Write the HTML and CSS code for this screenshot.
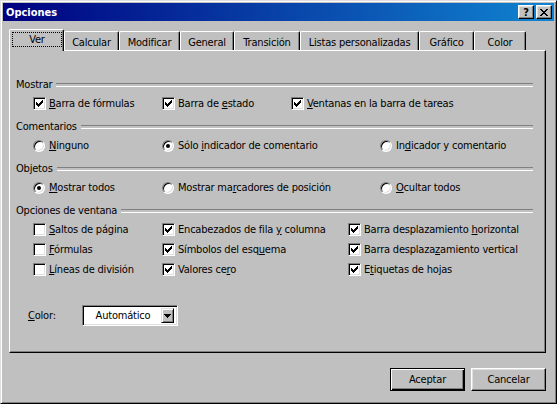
FILE: index.html
```html
<!DOCTYPE html>
<html lang="es">
<head>
<meta charset="utf-8">
<title>Opciones</title>
<link rel="stylesheet" href="styles.css">
</head>
<body>
<div class="window">
  <div class="titlebar">
    <span class="title">Opciones</span>
    <div class="caption-buttons">
      <span class="cap-btn help">?</span>
      <span class="cap-btn close">
        <svg width="8" height="7" viewBox="0 0 8 7" shape-rendering="crispEdges">
          <rect x="0" y="0" width="2" height="1"/><rect x="6" y="0" width="2" height="1"/>
          <rect x="1" y="1" width="2" height="1"/><rect x="5" y="1" width="2" height="1"/>
          <rect x="2" y="2" width="4" height="1"/>
          <rect x="3" y="3" width="2" height="1"/>
          <rect x="2" y="4" width="4" height="1"/>
          <rect x="1" y="5" width="2" height="1"/><rect x="5" y="5" width="2" height="1"/>
          <rect x="0" y="6" width="2" height="1"/><rect x="6" y="6" width="2" height="1"/>
        </svg>
      </span>
    </div>
  </div>

  <div class="content">
    <div class="tabs">
      <div class="tab active"><span class="focus">Ver</span></div>
      <div class="tab">Calcular</div>
      <div class="tab">Modificar</div>
      <div class="tab">General</div>
      <div class="tab">Transición</div>
      <div class="tab">Listas personalizadas</div>
      <div class="tab">Gráfico</div>
      <div class="tab">Color</div>
    </div>

    <div class="panel">
      <section class="group">
        <div class="group-title">Mostrar</div>
        <div class="rows cols-mostrar">
          <div class="opt"><span class="check on"></span><span><u>B</u>arra de fórmulas</span></div>
          <div class="opt"><span class="check on"></span><span>Barra de <u>e</u>stado</span></div>
          <div class="opt"><span class="check on"></span><span><u>V</u>entanas en la barra de tareas</span></div>
        </div>
      </section>

      <section class="group">
        <div class="group-title">Comentarios</div>
        <div class="rows cols-radio">
          <div class="opt"><span class="radio"></span><span><u>N</u>inguno</span></div>
          <div class="opt"><span class="radio on"></span><span>Sólo <u>i</u>ndicador de comentario</span></div>
          <div class="opt"><span class="radio"></span><span>In<u>d</u>icador y comentario</span></div>
        </div>
      </section>

      <section class="group">
        <div class="group-title">Objetos</div>
        <div class="rows cols-radio">
          <div class="opt"><span class="radio on"></span><span><u>M</u>ostrar todos</span></div>
          <div class="opt"><span class="radio"></span><span>Mostrar ma<u>r</u>cadores de posición</span></div>
          <div class="opt"><span class="radio"></span><span><u>O</u>cultar todos</span></div>
        </div>
      </section>

      <section class="group">
        <div class="group-title">Opciones de ventana</div>
        <div class="rows cols-ventana">
          <div class="opt"><span class="check"></span><span><u>S</u>altos de página</span></div>
          <div class="opt"><span class="check on"></span><span>Encabezados de fila <u>y</u> columna</span></div>
          <div class="opt"><span class="check on"></span><span>Barra desplazamiento <u>h</u>orizontal</span></div>
          <div class="opt"><span class="check"></span><span><u>F</u>órmulas</span></div>
          <div class="opt"><span class="check on"></span><span>Símbolos del esq<u>u</u>ema</span></div>
          <div class="opt"><span class="check on"></span><span>Barra desplaza<u>z</u>amiento vertical</span></div>
          <div class="opt"><span class="check"></span><span><u>L</u>íneas de división</span></div>
          <div class="opt"><span class="check on"></span><span>Valores ce<u>r</u>o</span></div>
          <div class="opt"><span class="check on"></span><span>E<u>t</u>iquetas de hojas</span></div>
        </div>
      </section>

      <div class="color-row">
        <span class="color-label"><u>C</u>olor:</span>
        <div class="combo">
          <span class="combo-text">Automático</span>
          <span class="combo-btn">
            <svg width="7" height="4" viewBox="0 0 7 4" shape-rendering="crispEdges">
              <rect x="0" y="0" width="7" height="1"/>
              <rect x="1" y="1" width="5" height="1"/>
              <rect x="2" y="2" width="3" height="1"/>
              <rect x="3" y="3" width="1" height="1"/>
            </svg>
          </span>
        </div>
      </div>
    </div>

    <div class="footer">
      <span class="button default">Aceptar</span>
      <span class="button">Cancelar</span>
    </div>
  </div>
</div>
</body>
</html>
```

FILE: styles.css
```css
* { box-sizing: border-box; }

html, body {
  margin: 0;
  padding: 0;
}

body {
  width: 557px;
  height: 404px;
  overflow: hidden;
  background: #c0c0c0;
  font-family: "DejaVu Sans Condensed", "DejaVu Sans", sans-serif;
  font-stretch: condensed;
  font-size: 11px;
  line-height: 13px;
  letter-spacing: -0.2px;
  color: #000;
}

u { text-decoration: underline; text-underline-offset: 1px; }

.window {
  width: 557px;
  height: 404px;
  background: #c0c0c0;
  border: 1px solid;
  border-color: #dfdfdf #000 #000 #dfdfdf;
  box-shadow: inset 1px 1px #fff, inset -1px -1px #808080;
  padding: 2px;
  display: flex;
  flex-direction: column;
}

/* ---------- title bar ---------- */
.titlebar {
  height: 18px;
  flex: none;
  background: linear-gradient(to right, #000080, #1084d0);
  display: flex;
  align-items: center;
  justify-content: space-between;
  padding: 0 2px 0 3px;
}

.title {
  color: #fff;
  font-weight: bold;
  font-size: 11px;
  letter-spacing: 0;
}

.caption-buttons {
  display: flex;
  gap: 2px;
}

.cap-btn {
  width: 16px;
  height: 14px;
  background: #c0c0c0;
  border: 1px solid;
  border-color: #fff #000 #000 #fff;
  box-shadow: inset -1px -1px #808080, inset 1px 1px #dfdfdf;
  display: flex;
  align-items: center;
  justify-content: center;
}

.cap-btn.help {
  font-weight: bold;
  font-size: 11px;
  line-height: 12px;
  padding-top: 1px;
}

.cap-btn svg { display: block; fill: #000; }

/* ---------- content ---------- */
.content {
  flex: 1;
  display: flex;
  flex-direction: column;
  padding: 8px 8px 0 6px;
}

.tabs {
  display: flex;
  align-items: flex-end;
  height: 21px;
  flex: none;
  position: relative;
  z-index: 1;
}

.tab {
  height: 19px;
  border-left: 1px solid #fff;
  border-top: 1px solid #fff;
  border-right: 1px solid #000;
  border-radius: 2px 2px 0 0;
  box-shadow: inset -1px 0 #808080;
  text-align: center;
  padding-top: 4px;
  white-space: nowrap;
  background: #c0c0c0;
}

.tab:nth-child(1) { width: 55px; }
.tab:nth-child(2) { width: 55px; }
.tab:nth-child(3) { width: 61px; }
.tab:nth-child(4) { width: 54px; }
.tab:nth-child(5) { width: 66px; }
.tab:nth-child(6) { width: 119px; }
.tab:nth-child(7) { width: 55px; }
.tab:nth-child(8) { width: 52px; }

.tab.active {
  height: 22px;
  margin-bottom: -1px;
  padding: 2px 1px 0 2px;
}

.focus {
  display: block;
  height: 15px;
  border: 1px dotted #000;
  line-height: 14px;
}

.panel {
  height: 303px;
  flex: none;
  border: 1px solid;
  border-color: #fff #000 #000 #fff;
  box-shadow: inset -1px -1px #808080;
  padding: 27px 12px 0 6px;
}

.group + .group { margin-top: 10px; }

.group-title {
  display: flex;
  align-items: center;
  height: 13px;
  white-space: nowrap;
}

.group-title::after {
  content: "";
  flex: 1;
  height: 2px;
  border-top: 1px solid #808080;
  border-bottom: 1px solid #fff;
  margin-left: 4px;
}

.rows {
  display: grid;
  padding-left: 17px;
  margin-top: 6px;
  row-gap: 7px;
}

.cols-mostrar { grid-template-columns: 129px 129px 1fr; }
.cols-radio   { grid-template-columns: 129px 218px 1fr; }
.cols-ventana { grid-template-columns: 129px 186px 1fr; }

.opt {
  display: flex;
  align-items: center;
  gap: 3px;
  height: 13px;
  white-space: nowrap;
}

.check {
  flex: none;
  width: 13px;
  height: 13px;
  background: #fff;
  border: 1px solid;
  border-color: #808080 #fff #fff #808080;
  box-shadow: inset 1px 1px #000, inset -1px -1px #dfdfdf;
  position: relative;
}

.check.on::after {
  content: "";
  position: absolute;
  left: 2px;
  top: 2px;
  width: 7px;
  height: 7px;
  background:
    linear-gradient(#000, #000) 0 2px / 1px 3px no-repeat,
    linear-gradient(#000, #000) 1px 3px / 1px 3px no-repeat,
    linear-gradient(#000, #000) 2px 4px / 1px 3px no-repeat,
    linear-gradient(#000, #000) 3px 3px / 1px 3px no-repeat,
    linear-gradient(#000, #000) 4px 2px / 1px 3px no-repeat,
    linear-gradient(#000, #000) 5px 1px / 1px 3px no-repeat,
    linear-gradient(#000, #000) 6px 0 / 1px 3px no-repeat;
}

.radio {
  flex: none;
  width: 12px;
  height: 12px;
  margin-right: 1px;
  border-radius: 50%;
  background: #fff;
  border: 1px solid;
  border-color: #808080 #fff #fff #808080;
  box-shadow: inset 1px 1px #000, inset -1px -1px #dfdfdf;
  position: relative;
}

.radio.on::after {
  content: "";
  position: absolute;
  left: 3px;
  top: 3px;
  width: 4px;
  height: 4px;
  border-radius: 50%;
  background: #000;
}

/* ---------- color row ---------- */
.color-row {
  display: flex;
  align-items: center;
  margin-top: 29px;
  padding-left: 12px;
}

.color-label { width: 54px; }

.combo {
  width: 96px;
  height: 21px;
  background: #fff;
  border: 1px solid;
  border-color: #808080 #fff #fff #808080;
  box-shadow: inset 1px 1px #000, inset -1px -1px #dfdfdf;
  display: flex;
  align-items: center;
  padding: 2px 3px 2px 2px;
}

.combo-text {
  flex: 1;
  text-align: center;
}

.combo-btn {
  width: 13px;
  height: 15px;
  background: #c0c0c0;
  border: 1px solid;
  border-color: #dfdfdf #000 #000 #dfdfdf;
  box-shadow: inset 1px 1px #fff, inset -1px -1px #808080;
  display: flex;
  align-items: center;
  justify-content: center;
}

.combo-btn svg { display: block; fill: #000; }

/* ---------- footer ---------- */
.footer {
  display: flex;
  justify-content: flex-end;
  gap: 6px;
  margin-top: 15px;
}

.button {
  width: 75px;
  height: 23px;
  background: #c0c0c0;
  border: 1px solid;
  border-color: #fff #000 #000 #fff;
  box-shadow: inset -1px -1px #808080, inset 1px 1px #dfdfdf;
  display: flex;
  align-items: center;
  justify-content: center;
}

.button.default {
  border-color: #000;
  box-shadow: inset 1px 1px #fff, inset -1px -1px #000, inset -2px -2px #808080;
}
```
